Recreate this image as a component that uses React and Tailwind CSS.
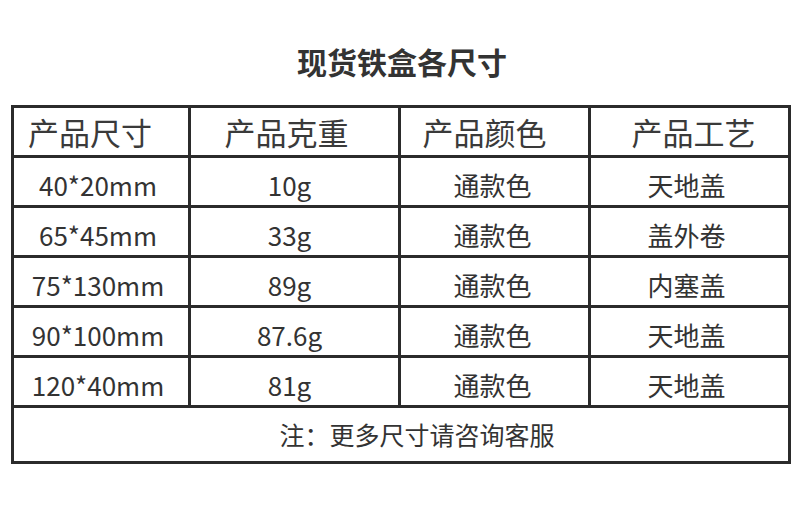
import React from 'react';

const rows = [
  ['40*20mm', '10g', '通款色', '天地盖'],
  ['65*45mm', '33g', '通款色', '盖外卷'],
  ['75*130mm', '89g', '通款色', '内塞盖'],
  ['90*100mm', '87.6g', '通款色', '天地盖'],
  ['120*40mm', '81g', '通款色', '天地盖'],
];

const headers = [
  { text: '产品尺寸', shift: 'pr-[22px]' },
  { text: '产品克重', shift: 'pr-[16px]' },
  { text: '产品颜色', shift: 'pr-[20px]' },
  { text: '产品工艺', shift: 'pl-[8px]' },
];

const cellShift = ['pr-[6px]', 'pr-[10px]', 'pr-[4px]', 'pr-[6px]'];

export default function App() {
  return (
    <div
      className="w-[800px] h-[516px] bg-white text-[#333] overflow-hidden"
      style={{ fontFamily: '"Noto Sans CJK SC", "Noto Sans", sans-serif' }}
    >
      <h1 className="pt-[46px] text-center text-[30px] leading-[30px] font-bold text-[#333] pl-[4px]">
        现货铁盒各尺寸
      </h1>

      <div className="mt-[29px] ml-[11px] w-[780px] bg-[#2b2b2b] p-[3px] grid grid-cols-[174px_207px_187px_197px] gap-[3px]">
        {headers.map((h) => (
          <div
            key={h.text}
            className={`bg-white h-[47px] flex items-center justify-center text-[31px] leading-none font-normal text-[#3a3a3a] ${h.shift}`}
          >
            {h.text}
          </div>
        ))}
        {rows.map((r, i) =>
          r.map((c, j) => (
            <div
              key={i + '-' + j}
              className={`bg-white h-[47px] flex items-center justify-center pt-[6px] text-[26px] leading-none text-[#333] ${cellShift[j]}`}
            >
              {c}
            </div>
          ))
        )}
        <div className="col-span-4 bg-white h-[53px] flex items-center justify-center pl-[32px] text-[25px] leading-none text-[#333]">
          注：更多尺寸请咨询客服
        </div>
      </div>
    </div>
  );
}
